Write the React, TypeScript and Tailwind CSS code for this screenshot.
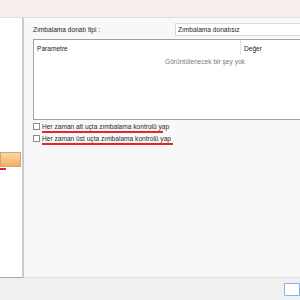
import React from "react";

export default function App() {
  return (
    <div
      className="w-[300px] h-[300px] overflow-hidden flex flex-col bg-[#f0f0f0] text-[6.6px] text-[#1e1e1e]"
      style={{ fontFamily: '"Liberation Sans", Arial, sans-serif' }}
    >
      {/* Title strip */}
      <div className="h-[18px] shrink-0 bg-[#f8efec] border-b border-[#e2dedd]" />

      <div className="flex flex-1 min-h-0">
        {/* Left panel */}
        <div className="w-[24px] shrink-0 bg-white border-r-2 border-b border-r-[#cbcbcf] border-b-[#a8a8a8] flex flex-col pt-[134px]">
          <div className="h-[15px] w-[21px] border border-[#d0a878] bg-gradient-to-b from-[#fcd8a8] to-[#f7ae5c]" />
          <div className="h-[2px] w-[6px] bg-[#e8232a] mt-[1px]" />
        </div>

        {/* Right content */}
        <div className="flex-1 min-w-0 bg-[#f8f8f8] pl-[9px] pt-[5px] border-b border-[#e0e0e0] overflow-hidden">
          <div className="flex items-center h-[13px]">
            <span className="w-[142px] shrink-0">Zımbalama donatı tipi :</span>
            <div className="flex-1 h-[13px] bg-white border border-[#d8d8d8] border-r-0 pl-[2px] flex items-center">
              Zımbalama donatısız
            </div>
          </div>

          <div className="mt-[3px] h-[81px] bg-white border border-[#a0a0a8] border-r-0 flex flex-col">
            <div className="flex h-[15px]">
              <div className="w-[207px] pl-[3px] pt-[4px] border-r border-[#e4e4e4]">Parametre</div>
              <div className="pl-[3px] pt-[4px]">Değer</div>
            </div>
            <div className="pl-[131px] pt-[2px] text-[#7a7a7a]">Görüntülenecek bir şey yok</div>
          </div>

          <div className="mt-[3px] flex flex-col gap-[4px]">
            <div className="flex items-start gap-[2px] h-[8px]">
              <div className="w-[7px] h-[7px] border border-[#8c8c8c] bg-white" />
              <div className="flex flex-col">
                <span className="leading-[8px] text-[#2a2a2a]">Her zaman alt uçta zımbalama kontrolü yap</span>
                <div className="h-[2px] w-[121px] bg-[#e8232a]" />
              </div>
            </div>
            <div className="flex items-start gap-[2px] h-[8px]">
              <div className="w-[7px] h-[7px] border border-[#8c8c8c] bg-white" />
              <div className="flex flex-col">
                <span className="leading-[8px] text-[#2a2a2a]">Her zaman üst uçta zımbalama kontrolü yap</span>
                <div className="h-[2px] w-[131px] bg-[#e8232a]" />
              </div>
            </div>
          </div>
        </div>
      </div>

      {/* Bottom bar */}
      <div className="h-[22px] shrink-0 flex justify-end items-start pt-[5px]">
        <div className="w-[16px] h-[13px] bg-white border border-[#7eb4ea] rounded-l-[1px]" />
      </div>
    </div>
  );
}
